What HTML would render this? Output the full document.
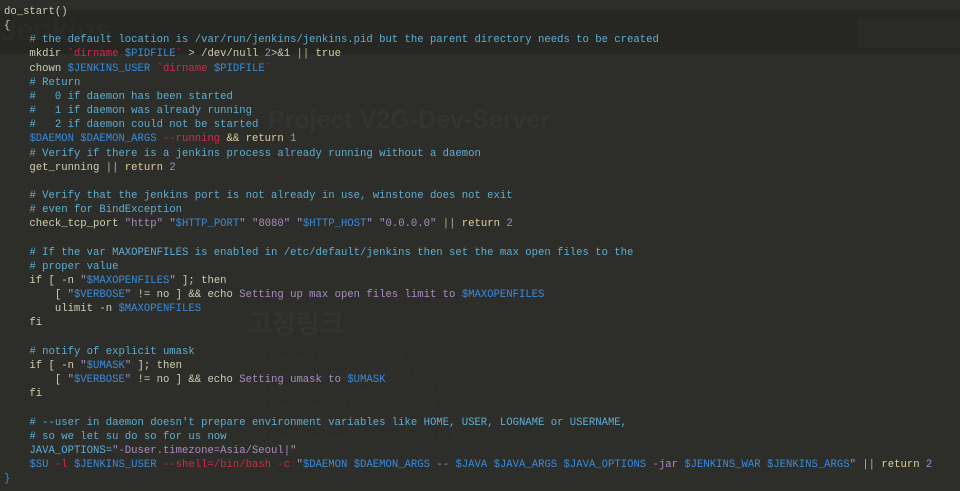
<!DOCTYPE html>
<html><head><meta charset="utf-8"><style>
html,body{margin:0;padding:0}
body{width:960px;height:491px;background:#2d2e29;position:relative;overflow:hidden}
.band{position:absolute;left:0;top:10px;width:960px;height:44px;background:#262723}
.search{position:absolute;left:857px;top:17px;width:103px;height:31px;background:#2a2b27;border-radius:3px}
.g{position:absolute;color:#33342f;font-family:"Liberation Sans","Noto Sans CJK KR",sans-serif;white-space:nowrap}
pre{position:absolute;left:4px;top:5px;margin:0;font-family:"Liberation Mono",monospace;font-size:10.6px;line-height:14.15px;color:#d2cdb0}
.c{color:#5eaed2}.v{color:#3a8ada}.r{color:#d2284c}.s{color:#a98cc0}.k{color:#ddd09c}.n{color:#a98cc0}.o{color:#b5b096}
</style></head><body>
<div class="band"></div>
<div class="search"></div>
<div class="g" style="left:0;top:14px;font-size:30px;font-weight:bold;color:#2a2b26">Jenkins</div>
<div class="g" style="left:268px;top:106px;font-size:25px;font-weight:bold">Project V2G-Dev-Server</div>
<div class="g" style="left:248px;top:304px;font-size:26px;font-weight:bold">고정링크</div>
<div class="g" style="left:262px;top:350px;font-size:12px;line-height:16px;color:#31322d">• Last build (#174) 15 hr 전<br>• Last stable build (#174) 15 hr 전<br>• Last successful build (#174) 15 hr 전<br>• Last failed build (#173) 19 hr 전<br>• Last unsuccessful build (#173) 19 hr 전<br>• Last completed build (#174) 15 hr 전</div>
<pre>do_start()
{
    <span class="c"># the default location is /var/run/jenkins/jenkins.pid but the parent directory needs to be created</span>
    mkdir <span class="r">`dirname </span><span class="v">$PIDFILE</span><span class="r">`</span> &gt; /dev/null <span class="n">2</span>&gt;&amp;1 <span class="o">||</span> <span class="k">true</span>
    chown <span class="v">$JENKINS_USER</span> <span class="r">`dirname </span><span class="v">$PIDFILE</span><span class="r">`</span>
    <span class="c"># Return</span>
    <span class="c">#   0 if daemon has been started</span>
    <span class="c">#   1 if daemon was already running</span>
    <span class="c">#   2 if daemon could not be started</span>
    <span class="v">$DAEMON $DAEMON_ARGS</span> <span class="r">--running</span> <span class="k">&amp;&amp; return</span> <span class="n">1</span>
    <span class="c"># Verify if there is a jenkins process already running without a daemon</span>
    get_running <span class="o">||</span> <span class="k">return</span> <span class="n">2</span>

    <span class="c"># Verify that the jenkins port is not already in use, winstone does not exit</span>
    <span class="c"># even for BindException</span>
    check_tcp_port <span class="s">"http"</span> <span class="s">"</span><span class="v">$HTTP_PORT</span><span class="s">"</span> <span class="s">"8080"</span> <span class="s">"</span><span class="v">$HTTP_HOST</span><span class="s">"</span> <span class="s">"0.0.0.0"</span> <span class="o">||</span> <span class="k">return</span> <span class="n">2</span>

    <span class="c"># If the var MAXOPENFILES is enabled in /etc/default/jenkins then set the max open files to the</span>
    <span class="c"># proper value</span>
    if [ -n <span class="s">"</span><span class="v">$MAXOPENFILES</span><span class="s">"</span> ]; then
        [ <span class="s">"</span><span class="v">$VERBOSE</span><span class="s">"</span> != no ] &amp;&amp; echo <span class="s">Setting up max open files limit to </span><span class="v">$MAXOPENFILES</span>
        ulimit -n <span class="v">$MAXOPENFILES</span>
    fi

    <span class="c"># notify of explicit umask</span>
    if [ -n <span class="s">"</span><span class="v">$UMASK</span><span class="s">"</span> ]; then
        [ <span class="s">"</span><span class="v">$VERBOSE</span><span class="s">"</span> != no ] &amp;&amp; echo <span class="s">Setting umask to </span><span class="v">$UMASK</span>
    fi

    <span class="c"># --user in daemon doesn't prepare environment variables like HOME, USER, LOGNAME or USERNAME,</span>
    <span class="c"># so we let su do so for us now</span>
    <span class="c">JAVA_OPTIONS=</span><span class="s">"-Duser.timezone=Asia/Seoul|"</span>
    <span class="v">$SU</span> <span class="r">-l</span> <span class="v">$JENKINS_USER</span> <span class="r">--shell=/bin/bash -c</span> <span class="s">"</span><span class="v">$DAEMON $DAEMON_ARGS</span><span class="s"> -- </span><span class="v">$JAVA $JAVA_ARGS $JAVA_OPTIONS</span><span class="s"> -jar </span><span class="v">$JENKINS_WAR $JENKINS_ARGS</span><span class="s">"</span> <span class="o">||</span> <span class="k">return</span> <span class="n">2</span>
<span class="v">}</span></pre>
</body></html>
